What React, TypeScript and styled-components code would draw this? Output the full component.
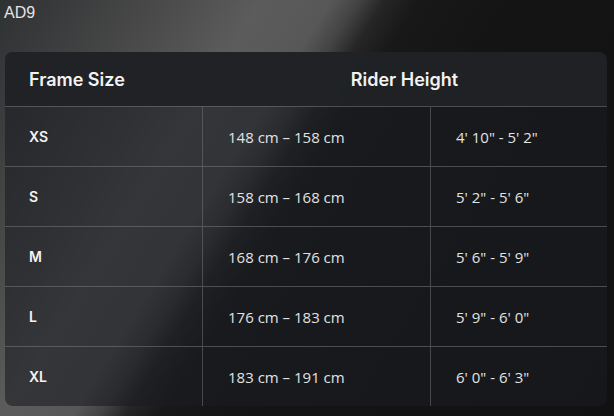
import React from "react";
import styled, { createGlobalStyle } from "styled-components";

const Global = createGlobalStyle`
  html, body { margin: 0; padding: 0; }
  body {
    width: 614px;
    height: 416px;
    overflow: hidden;
    background: #141414;
  }
`;

const Page = styled.div`
  width: 614px;
  height: 416px;
  box-sizing: border-box;
  padding: 4px 7px 0 5px;
  background: linear-gradient(
    122deg,
    #2e3132 0%,
    #3a3b3c 8%,
    #4c4c4c 20%,
    #5c5c5c 30%,
    #575757 38%,
    #444444 41%,
    #262626 44%,
    #181818 48%,
    #141414 60%,
    #111111 100%
  );
  display: flex;
  flex-direction: column;
`;

const Title = styled.div`
  font-family: "Liberation Sans", Arial, sans-serif;
  font-size: 16px;
  line-height: 18px;
  color: #e4e4e4;
  margin-left: -1px;
  height: 48px;
`;

const Card = styled.div`
  border-radius: 8px;
  overflow: hidden;
  background: rgba(26, 29, 33, 0.6);
  display: grid;
  grid-template-columns: 197px 228px 1fr;
`;

const HeadCell = styled.div<{ $span?: number; $center?: boolean }>`
  grid-column: span ${(p) => p.$span ?? 1};
  height: 54px;
  display: flex;
  align-items: center;
  justify-content: ${(p) => (p.$center ? "center" : "flex-start")};
  padding-left: ${(p) => (p.$center ? "0" : "24px")};
  background: rgba(32, 34, 37, 0.97);
  color: #f2f2f2;
  font-family: "Inter", "Lato", sans-serif;
  font-weight: 600;
  font-size: 18px;
`;

const Cell = styled.div<{ $first?: boolean; $bold?: boolean }>`
  height: 59px;
  border-top: 1px solid rgba(120, 120, 120, 0.55);
  border-left: ${(p) => (p.$first ? "none" : "1px solid rgba(120,120,120,0.5)")};
  display: flex;
  align-items: center;
  padding-left: ${(p) => (p.$first ? "24px" : "25px")};
  color: ${(p) => (p.$bold ? "#f4f4f4" : "#e2e2e2")};
  font-family: ${(p) => (p.$bold ? '"Inter", sans-serif' : '"Open Sans", sans-serif')};
  font-weight: ${(p) => (p.$bold ? 600 : 400)};
  font-size: ${(p) => (p.$bold ? "14px" : "15px")};
`;

const rows = [
  ["XS", "148 cm – 158 cm", `4' 10" - 5' 2"`],
  ["S", "158 cm – 168 cm", `5' 2" - 5' 6"`],
  ["M", "168 cm – 176 cm", `5' 6" - 5' 9"`],
  ["L", "176 cm – 183 cm", `5' 9" - 6' 0"`],
  ["XL", "183 cm – 191 cm", `6' 0" - 6' 3"`],
];

export default function App() {
  return (
    <>
      <Global />
      <Page>
        <Title>AD9</Title>
        <Card>
          <HeadCell>Frame Size</HeadCell>
          <HeadCell $span={2} $center>
            Rider Height
          </HeadCell>
          {rows.map((r) => (
            <React.Fragment key={r[0]}>
              <Cell $first $bold>
                {r[0]}
              </Cell>
              <Cell>{r[1]}</Cell>
              <Cell>{r[2]}</Cell>
            </React.Fragment>
          ))}
        </Card>
      </Page>
    </>
  );
}
